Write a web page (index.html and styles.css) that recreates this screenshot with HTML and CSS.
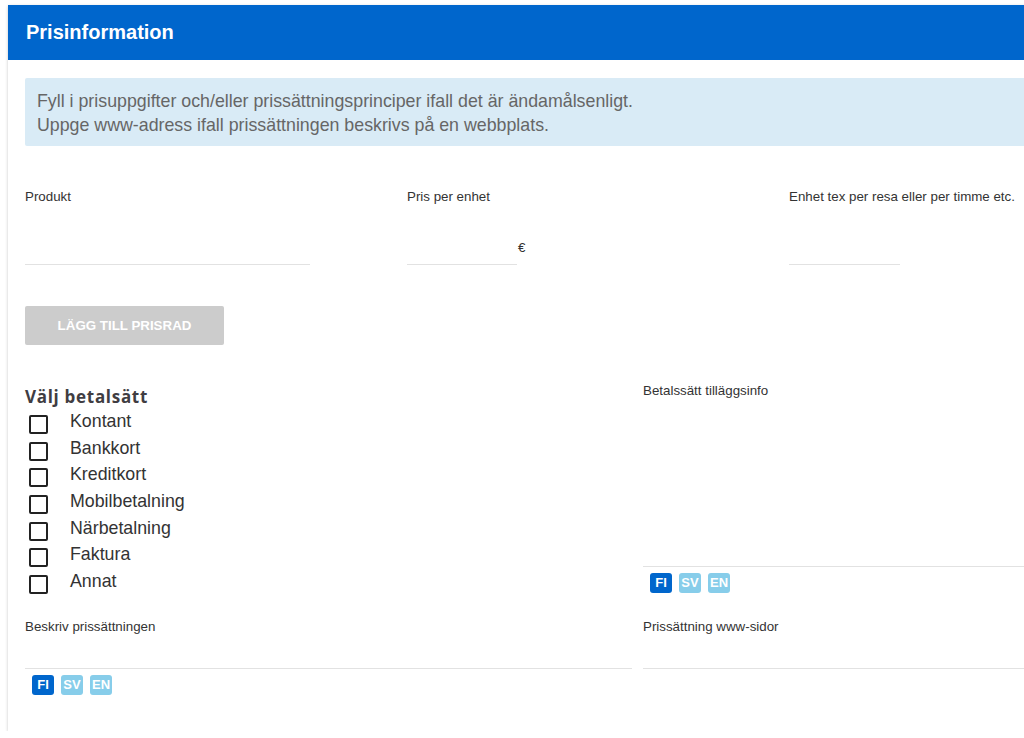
FILE: index.html
```html
<!DOCTYPE html>
<html lang="sv">
<head>
<meta charset="utf-8">
<title>Prisinformation</title>
<link rel="stylesheet" href="styles.css">
</head>
<body>
<div class="card">
  <div class="card-header">Prisinformation</div>
  <div class="card-body">
    <div class="info">
      Fyll i prisuppgifter och/eller prissättningsprinciper ifall det är ändamålsenligt.<br>
      Uppge www-adress ifall prissättningen beskrivs på en webbplats.
    </div>

    <div class="price-row">
      <div class="field">
        <div class="label">Produkt</div>
        <div class="input-wrap"><div class="input input-product"></div></div>
      </div>
      <div class="field">
        <div class="label">Pris per enhet</div>
        <div class="input-wrap"><div class="input input-price"></div><span class="suffix">€</span></div>
      </div>
      <div class="field">
        <div class="label">Enhet tex per resa eller per timme etc.</div>
        <div class="input-wrap"><div class="input input-unit"></div></div>
      </div>
    </div>

    <button class="add-btn" type="button">Lägg till prisrad</button>

    <div class="two-col payment">
      <div class="col">
        <div class="heading">Välj betalsätt</div>
        <ul class="checks">
          <li><span class="box"></span><span>Kontant</span></li>
          <li><span class="box"></span><span>Bankkort</span></li>
          <li><span class="box"></span><span>Kreditkort</span></li>
          <li><span class="box"></span><span>Mobilbetalning</span></li>
          <li><span class="box"></span><span>Närbetalning</span></li>
          <li><span class="box"></span><span>Faktura</span></li>
          <li><span class="box"></span><span>Annat</span></li>
        </ul>
      </div>
      <div class="col">
        <div class="label">Betalssätt tilläggsinfo</div>
        <div class="textarea"></div>
        <div class="langs"><span class="lang active">FI</span><span class="lang">SV</span><span class="lang">EN</span></div>
      </div>
    </div>

    <div class="two-col describe">
      <div class="col">
        <div class="label">Beskriv prissättningen</div>
        <div class="line-input"></div>
        <div class="langs"><span class="lang active">FI</span><span class="lang">SV</span><span class="lang">EN</span></div>
      </div>
      <div class="col">
        <div class="label">Prissättning www-sidor</div>
        <div class="line-input"></div>
      </div>
    </div>
  </div>
</div>
</body>
</html>
```

FILE: styles.css
```css
html, body {
  margin: 0;
  padding: 0;
  overflow: hidden;
  background: #ffffff;
}
body {
  font-family: "Liberation Sans", Arial, sans-serif;
  color: #333;
}
.card {
  margin: 5px 0 0 8px;
  width: 1260px;
  background: #fff;
  box-shadow: 0 1px 3px rgba(0, 0, 0, 0.22);
}
.card-header {
  height: 55px;
  background: #0066cc;
  color: #fff;
  font-size: 20px;
  font-weight: bold;
  display: flex;
  align-items: center;
  padding-left: 18px;
}
.card-body {
  padding: 18px 17px 36px 17px;
}
.info {
  background: #d9ebf6;
  color: #666;
  font-size: 17.8px;
  line-height: 24px;
  padding: 11px 12px 9px;
  border-radius: 2px;
}
.price-row {
  margin-top: 43px;
  display: grid;
  grid-template-columns: 382px 382px 382px;
}
.label {
  font-size: 13.33px;
  line-height: 16px;
  color: #333;
}
.input-wrap {
  display: flex;
  align-items: flex-end;
  height: 60px;
}
.input {
  height: 59px;
  border-bottom: 1px solid #e2e2e2;
}
.input-product { width: 285px; }
.input-price { width: 110px; }
.input-unit { width: 111px; }
.suffix {
  font-size: 13.33px;
  line-height: 16px;
  margin: 0 0 9px 1px;
}
.add-btn {
  display: block;
  margin-top: 41px;
  width: 199px;
  height: 39px;
  border: none;
  border-radius: 2px;
  background: #cccccc;
  color: #fff;
  font-family: "Liberation Sans", Arial, sans-serif;
  font-size: 13.33px;
  font-weight: bold;
  text-transform: uppercase;
  padding: 0;
}
.two-col {
  display: grid;
  grid-template-columns: 607px 1fr;
  column-gap: 11px;
}
.payment {
  margin-top: 38px;
}
.heading {
  margin-top: 3px;
  font-family: "Open Sans", sans-serif;
  font-weight: 700;
  font-size: 17px;
  letter-spacing: 0.7px;
  line-height: 22px;
  color: #403d42;
}
.checks {
  list-style: none;
  margin: 0;
  padding: 0;
}
.checks li {
  display: flex;
  align-items: flex-start;
  height: 26.67px;
  font-size: 17.8px;
  line-height: 26.67px;
  color: #333;
}
.box {
  box-sizing: border-box;
  width: 19px;
  height: 19px;
  border: 2px solid #222;
  border-radius: 2px;
  margin: 7px 22px 0 4px;
  flex: none;
}
.textarea {
  height: 167px;
  border-bottom: 1px solid #e2e2e2;
}
.langs {
  display: flex;
  gap: 7px;
  margin-top: 6px;
  padding-left: 7px;
}
.lang {
  width: 22px;
  height: 20px;
  border-radius: 3px;
  background: #87cdea;
  color: #fff;
  font-size: 13px;
  font-weight: bold;
  line-height: 20px;
  text-align: center;
}
.lang.active {
  background: #0066cc;
}
.describe {
  margin-top: 24px;
}
.line-input {
  height: 33px;
  border-bottom: 1px solid #e2e2e2;
}
```
